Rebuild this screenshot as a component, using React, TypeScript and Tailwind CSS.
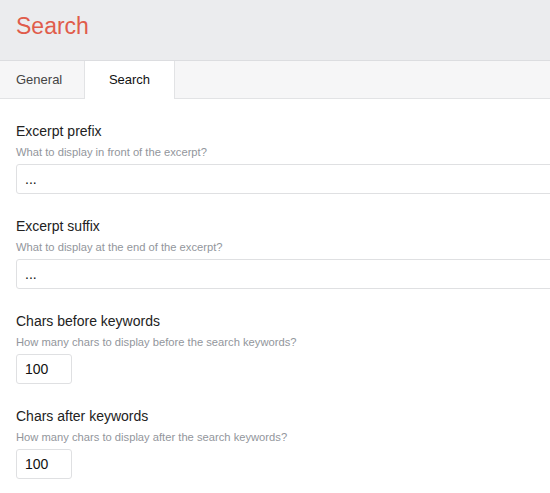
const fields = [
  { label: 'Excerpt prefix', help: 'What to display in front of the excerpt?', value: '...', wide: true },
  { label: 'Excerpt suffix', help: 'What to display at the end of the excerpt?', value: '...', wide: true },
  { label: 'Chars before keywords', help: 'How many chars to display before the search keywords?', value: '100', wide: false },
  { label: 'Chars after keywords', help: 'How many chars to display after the search keywords?', value: '100', wide: false },
];

export default function App() {
  return (
    <div className="w-[550px] h-[493px] overflow-hidden bg-white font-['Liberation_Sans']">
      {/* Header */}
      <div className="h-[61px] bg-[#ebecee] border-b border-[#dcdde0] pl-4 pt-[11px]">
        <h1 className="text-[23px] leading-[30px] text-[#e05c4b]">Search</h1>
      </div>

      {/* Tabs */}
      <div className="flex h-[38px] bg-[#f6f6f7] border-b border-[#e2e3e5]">
        <div className="w-[84px] pl-4 flex items-center text-[13px] text-[#444]">General</div>
        <div className="w-[91px] h-[38px] bg-white border-x border-[#e2e3e5] flex items-center justify-center text-[13px] text-[#111]">
          Search
        </div>
      </div>

      {/* Form */}
      <div className="pl-4 pt-[23px] flex flex-col gap-[23px]">
        {fields.map((f) => (
          <div key={f.label} className="flex flex-col">
            <label className="text-[14px] leading-[18px] text-[#222]">{f.label}</label>
            <div className="text-[11.2px] leading-[14px] mt-[5px] text-[#92969c]">{f.help}</div>
            <div
              className={
                'mt-[5px] h-[30px] border border-[#dfe0e2] rounded-[3px] flex items-center pl-[8px] text-[14px] text-[#111] ' +
                (f.wide ? 'w-[560px]' : 'w-[56px]')
              }
            >
              {f.value}
            </div>
          </div>
        ))}
      </div>
    </div>
  );
}
